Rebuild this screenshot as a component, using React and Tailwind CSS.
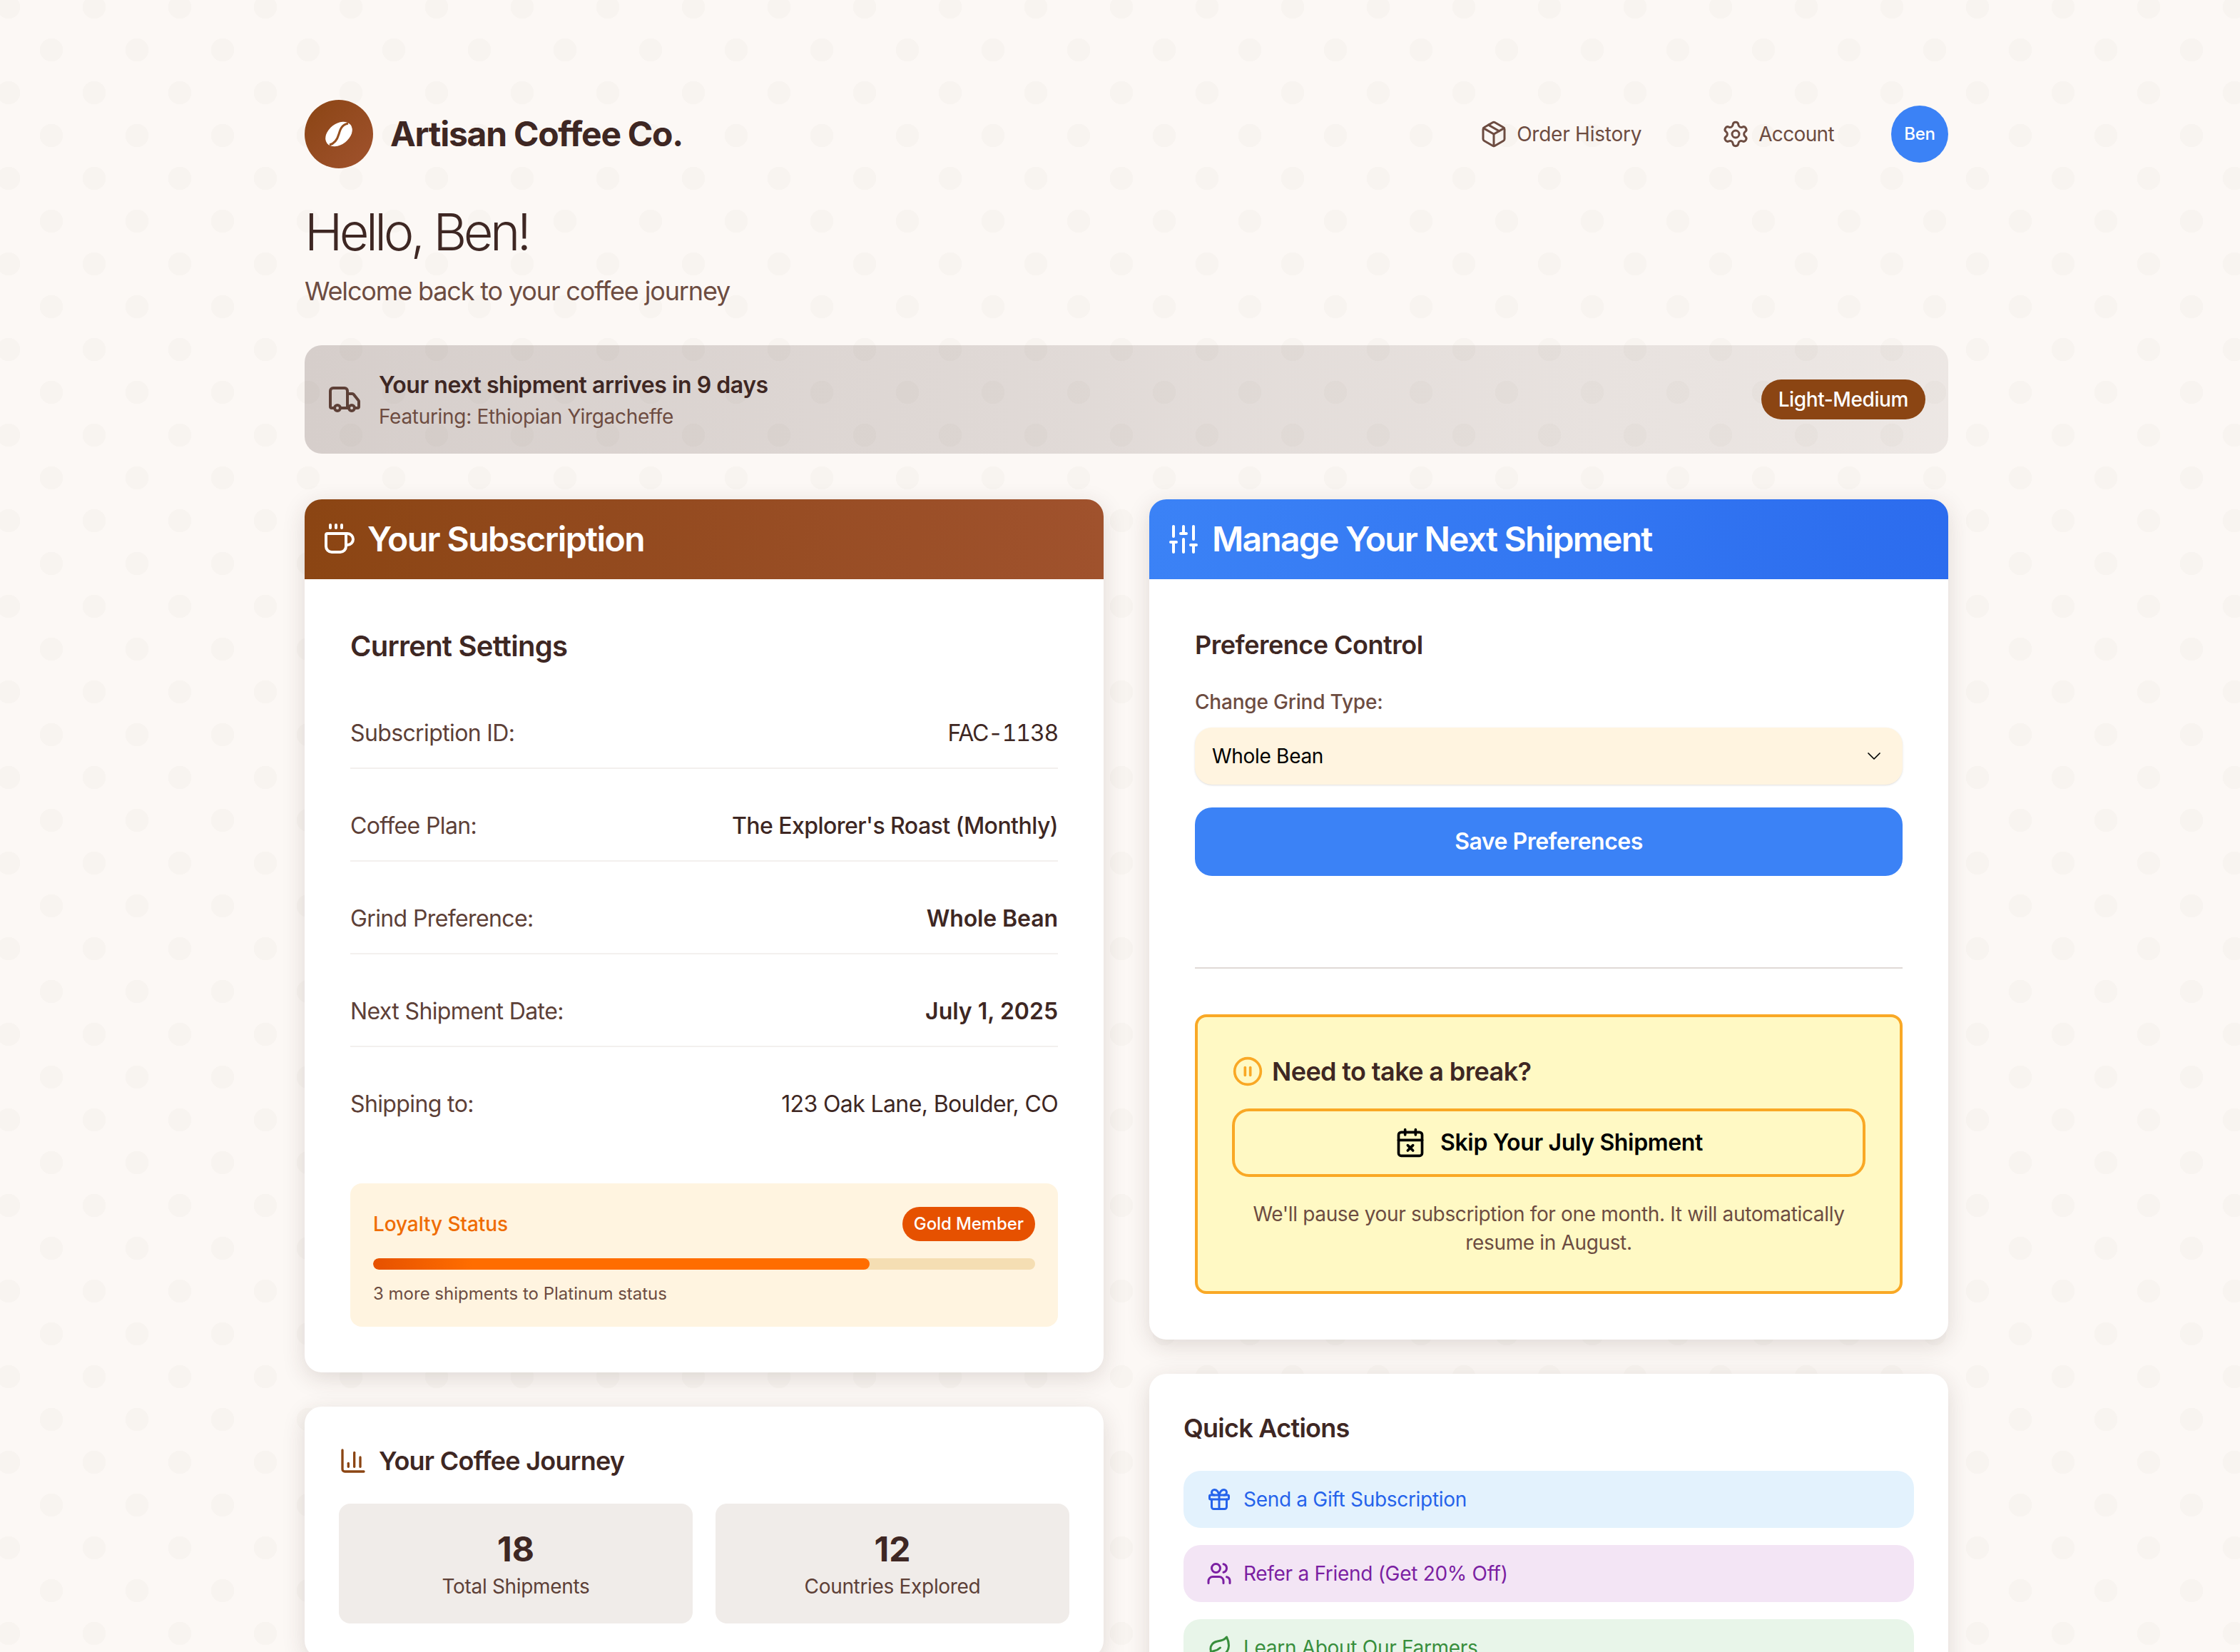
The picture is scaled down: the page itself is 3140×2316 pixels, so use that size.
import React from "react";
import { Package, Settings, Truck, Coffee, SlidersVertical, ChevronDown, CirclePause, CalendarX, ChartColumn, Gift, Users, Leaf } from "lucide-react";

function Row({ label, value, valueClass = "font-medium tracking-[-0.55px]", last = false }) {
  return (
    <div className={`flex items-center justify-between pb-6 ${last ? "" : "mb-14 border-b-2 border-[#f3f0ee]"}`}>
      <span className="text-[32px] leading-[48px] tracking-[-0.62px] text-[#5d4037]">{label}</span>
      <span className={`text-[32px] leading-[48px] text-[#3e2723] ${valueClass}`}>{value}</span>
    </div>
  );
}

function Action({ icon: Icon, label, box }) {
  return (
    <div className={`flex h-20 items-center gap-4 rounded-3xl px-8 text-[28px] tracking-[-0.3px] ${box}`}>
      <Icon size={36} strokeWidth={2} />
      <span>{label}</span>
    </div>
  );
}

function Stat({ n, label }) {
  return (
    <div className="flex h-[168px] flex-col items-center justify-center rounded-2xl bg-[#f0ece9]">
      <div className="text-[48px] font-bold leading-[64px] text-[#3e2723]">{n}</div>
      <div className="text-[28px] leading-[40px] tracking-[-0.32px] text-[#5d4037]">{label}</div>
    </div>
  );
}

export default function App() {
  return (
    <div className="h-[2316px] overflow-hidden bg-[#fcf8f5] bg-[radial-gradient(circle_at_60px_60px,#f8f4f0_16px,transparent_16.5px),radial-gradient(circle_at_60px_60px,#f8f4f0_16px,transparent_16.5px)] bg-size-[120px_120px] bg-position-[-48px_-50px,12px_10px] font-['Inter',sans-serif]">
      <div className="ml-[427px] w-[2304px] pt-[140px]">
        <header className="flex h-24 items-center">
          <div className="flex size-24 items-center justify-center rounded-full bg-linear-to-br from-[#8b4513] to-[#a0522d]">
            <svg viewBox="0 0 40 40" className="size-10">
              <ellipse cx="20" cy="20" rx="21" ry="14.5" fill="#fff" transform="rotate(-38 20 20)" />
              <path d="M33 5C24 7 22 13 20 20S15 33 7 35" fill="none" stroke="#96501f" strokeWidth="3" />
            </svg>
          </div>
          <div className="ml-6 text-[48px] font-bold tracking-[-1.25px] text-[#3e2723]">Artisan Coffee Co.</div>
          <nav className="ml-auto flex items-center text-[28px] tracking-[-0.24px] text-[#6d4c41]">
            <div className="flex items-center gap-3">
              <Package size={40} strokeWidth={1.8} />
              <span>Order History</span>
            </div>
            <div className="ml-28 flex items-center gap-3">
              <Settings size={40} strokeWidth={1.8} />
              <span className="tracking-[-0.65px]">Account</span>
            </div>
            <div className="ml-20 flex size-20 items-center justify-center rounded-full bg-[#3b82f6] text-[24px] font-medium text-white">Ben</div>
          </nav>
        </header>

        <h1 className="mt-[49px] text-[72px] font-light leading-[80px] tracking-[-4.5px] text-[#3e2723]">Hello, Ben!</h1>
        <p className="mt-[15px] text-[36px] leading-[56px] tracking-[-1.15px] text-[#6d4c41]">Welcome back to your coffee journey</p>

        <section className="mt-[48px] flex h-[152px] items-center rounded-3xl bg-linear-to-r from-[#3e2723]/20 to-[#3e2723]/[0.08] px-8">
          <Truck size={48} className="text-[#5d4037]" />
          <div className="ml-6 pt-[2px]">
            <div className="text-[32px] font-semibold leading-[44px] tracking-[-0.45px] text-[#3e2723]">Your next shipment arrives in 9 days</div>
            <div className="mt-[2px] text-[28px] leading-[40px] tracking-[-0.31px] text-[#6d4c41]">Featuring: Ethiopian Yirgacheffe</div>
          </div>
          <div className="ml-auto flex h-14 items-center rounded-full bg-[#8b4513] px-6 text-[28px] font-medium tracking-[-0.4px] text-white">Light-Medium</div>
        </section>

        <div className="mt-16 grid grid-cols-2 gap-16">
          <div className="flex flex-col gap-12">
            <div className="overflow-hidden rounded-3xl bg-white shadow-[0_8px_32px_rgba(62,39,35,0.15)]">
              <div className="flex h-28 items-center gap-4 bg-linear-to-r from-[#8b4513] to-[#a0522d] px-6 text-white">
                <Coffee size={48} />
                <h2 className="text-[48px] font-semibold tracking-[-1.55px]">Your Subscription</h2>
              </div>
              <div className="p-16">
                <h3 className="mb-[68px] text-[40px] font-semibold leading-[60px] tracking-[-0.75px] text-[#3e2723]">Current Settings</h3>
                <Row label="Subscription ID:" value="FAC-1138" valueClass="font-normal tracking-[-1.2px] tabular-nums" />
                <Row label="Coffee Plan:" value="The Explorer's Roast (Monthly)" />
                <Row label="Grind Preference:" value="Whole Bean" valueClass="font-semibold tracking-[-0.1px]" />
                <Row label="Next Shipment Date:" value="July 1, 2025" valueClass="font-semibold" />
                <Row label="Shipping to:" value="123 Oak Lane, Boulder, CO" valueClass="font-normal tracking-[-0.62px]" last />
                <div className="mt-[63px] rounded-2xl bg-[#fff4e0] px-8 pb-7 pt-[33px]">
                  <div className="flex items-center justify-between">
                    <span className="text-[28px] font-medium tracking-[-0.1px] text-[#ef6c00]">Loyalty Status</span>
                    <span className="flex h-12 items-center rounded-full bg-[#e65100] px-4 text-[24px] font-medium tracking-[-0.1px] text-white">Gold Member</span>
                  </div>
                  <div className="mt-6 h-4 overflow-hidden rounded-full bg-[#f5deb3]">
                    <div className="h-full w-3/4 rounded-full bg-linear-to-r from-[#e65100] from-0% to-[#ff6d00] to-20%" />
                  </div>
                  <div className="mt-[16px] text-[24px] leading-[36px] text-[#6d4c41]">3 more shipments to Platinum status</div>
                </div>
              </div>
            </div>

            <div className="rounded-3xl bg-white p-12 shadow-[0_8px_32px_rgba(62,39,35,0.15)]">
              <div className="mb-8 flex items-center gap-4">
                <ChartColumn size={40} className="text-[#8b4513]" />
                <h3 className="text-[36px] font-semibold leading-[56px] tracking-[-0.75px] text-[#3e2723]">Your Coffee Journey</h3>
              </div>
              <div className="grid grid-cols-2 gap-8">
                <Stat n="18" label="Total Shipments" />
                <Stat n="12" label="Countries Explored" />
              </div>
            </div>
          </div>

          <div className="flex flex-col gap-12">
            <div className="overflow-hidden rounded-3xl bg-white shadow-[0_8px_32px_rgba(62,39,35,0.15)]">
              <div className="flex h-28 items-center gap-4 bg-linear-to-r from-[#3b82f6] to-[#2c6cee] px-6 text-white">
                <SlidersVertical size={48} />
                <h2 className="text-[48px] font-semibold tracking-[-1.76px]">Manage Your Next Shipment</h2>
              </div>
              <div className="p-16">
                <h3 className="text-[36px] font-semibold leading-[56px] tracking-[-0.5px] text-[#3e2723]">Preference Control</h3>
                <div className="mt-8 text-[28px] font-medium leading-[40px] tracking-[-0.2px] text-[#6d4c41]">Change Grind Type:</div>
                <div className="mt-4 flex h-20 items-center justify-between rounded-3xl bg-[#fff4e0] px-6 text-[28px] tracking-[-0.3px] text-black shadow-sm">
                  <span>Whole Bean</span>
                  <ChevronDown size={32} strokeWidth={1.3} />
                </div>
                <div className="mt-8 flex h-24 items-center justify-center rounded-3xl bg-[#3b82f6] text-[32px] font-semibold tracking-[-0.5px] text-white">Save Preferences</div>
                <div className="mt-32 border-t-2 border-[#e0d9d6]" />
                <div className="mt-16 rounded-2xl border-4 border-[#f9a825] bg-[#fff9c4] p-12">
                  <div className="flex items-center gap-3">
                    <CirclePause size={44} className="text-[#f9a825]" />
                    <h4 className="text-[36px] font-semibold leading-[56px] tracking-[-0.62px] text-[#3e2723]">Need to take a break?</h4>
                  </div>
                  <div className="mt-6 flex h-24 items-center justify-center gap-5 rounded-3xl border-4 border-[#f9a825] text-[32px] font-semibold tracking-[-0.35px] text-black">
                    <CalendarX size={44} />
                    <span>Skip Your July Shipment</span>
                  </div>
                  <p className="mt-8 text-center text-[28px] leading-[40px] tracking-[-0.35px] text-[#6d4c41]">We'll pause your subscription for one month. It will automatically resume in August.</p>
                </div>
              </div>
            </div>

            <div className="rounded-3xl bg-white p-12 shadow-[0_8px_32px_rgba(62,39,35,0.15)]">
              <h3 className="text-[36px] font-semibold leading-[56px] tracking-[-0.75px] text-[#3e2723]">Quick Actions</h3>
              <div className="mt-8 flex flex-col gap-6">
                <Action icon={Gift} label="Send a Gift Subscription" box="bg-[#e3f2fd] text-[#2563eb]" />
                <Action icon={Users} label="Refer a Friend (Get 20% Off)" box="bg-[#f3e5f5] text-[#7b1fa2]" />
                <Action icon={Leaf} label="Learn About Our Farmers" box="bg-[#e8f5e9] text-[#388e3c]" />
              </div>
            </div>
          </div>
        </div>
      </div>
    </div>
  );
}
